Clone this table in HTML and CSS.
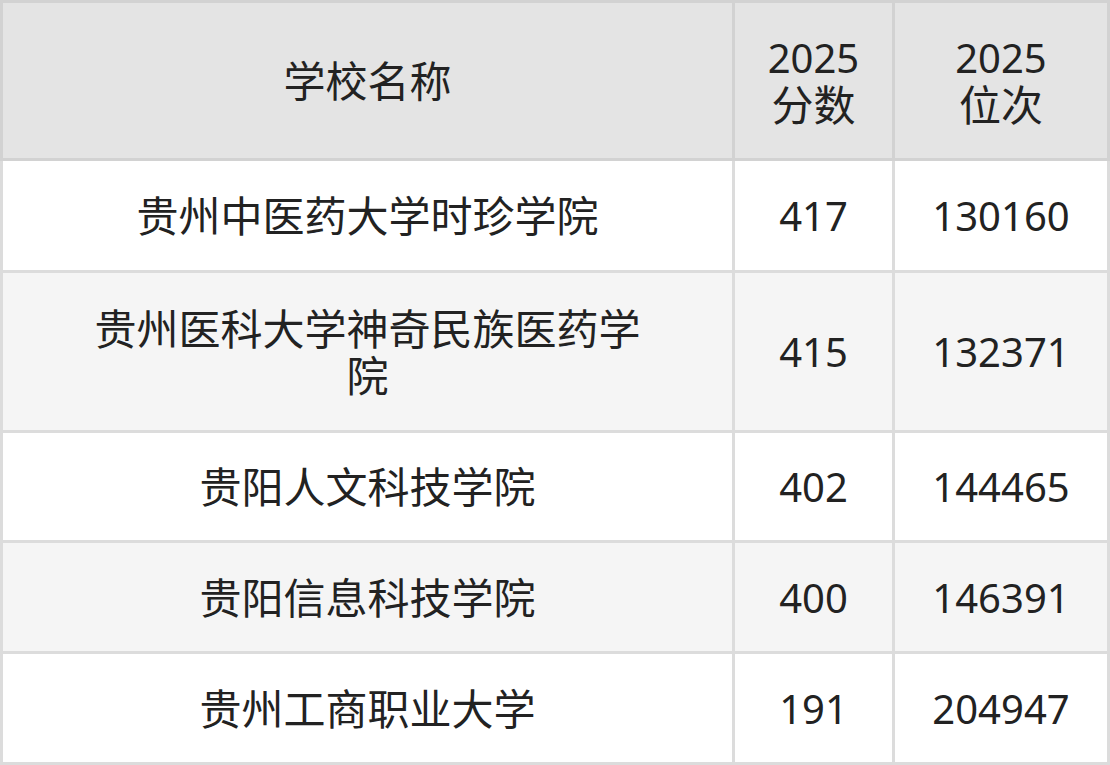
FILE: index.html
```html
<!DOCTYPE html>
<html lang="zh">
<head>
<meta charset="utf-8">
<link rel="stylesheet" href="styles.css">
</head>
<body>
<div class="table">
  <div class="head">
    <div class="cell name">学校名称</div>
    <div class="cell"><span class="line num">2025</span><span class="line">分数</span></div>
    <div class="cell"><span class="line num">2025</span><span class="line">位次</span></div>
  </div>
  <div class="body">
    <div class="cell name">贵州中医药大学时珍学院</div>
    <div class="cell num">417</div>
    <div class="cell num">130160</div>

    <div class="cell name alt">贵州医科大学神奇民族医药学院</div>
    <div class="cell num alt">415</div>
    <div class="cell num alt">132371</div>

    <div class="cell name">贵阳人文科技学院</div>
    <div class="cell num">402</div>
    <div class="cell num">144465</div>

    <div class="cell name alt">贵阳信息科技学院</div>
    <div class="cell num alt">400</div>
    <div class="cell num alt">146391</div>

    <div class="cell name">贵州工商职业大学</div>
    <div class="cell num">191</div>
    <div class="cell num">204947</div>
  </div>
</div>
</body>
</html>
```

FILE: styles.css
```css
html, body {
  margin: 0;
  padding: 0;
  background: #ffffff;
}

.table {
  width: 1110px;
  display: flex;
  flex-direction: column;
  font-family: "Noto Sans", "Noto Sans CJK SC", sans-serif;
  font-size: 42px;
  line-height: 47px;
  color: #222222;
}

.head {
  display: grid;
  grid-template-columns: 729px 157px 212px;
  grid-template-rows: 155px;
  column-gap: 3px;
  padding: 3px;
  background: #d2d2d2;
}

.head .cell {
  background: #e4e4e4;
  flex-direction: column;
}

.body {
  display: grid;
  grid-template-columns: 729px 157px 212px;
  grid-template-rows: 109px 157px 107px 108px 108px;
  gap: 3px;
  padding: 0 3px 3px 3px;
  background: #dcdcdc;
}

.cell {
  display: flex;
  align-items: center;
  justify-content: center;
  text-align: center;
  background: #ffffff;
  box-sizing: border-box;
}

.cell.alt {
  background: #f5f5f5;
}

.num {
  font-size: 40px;
}

.name {
  padding: 0 80px;
}

.line {
  display: block;
}
```
